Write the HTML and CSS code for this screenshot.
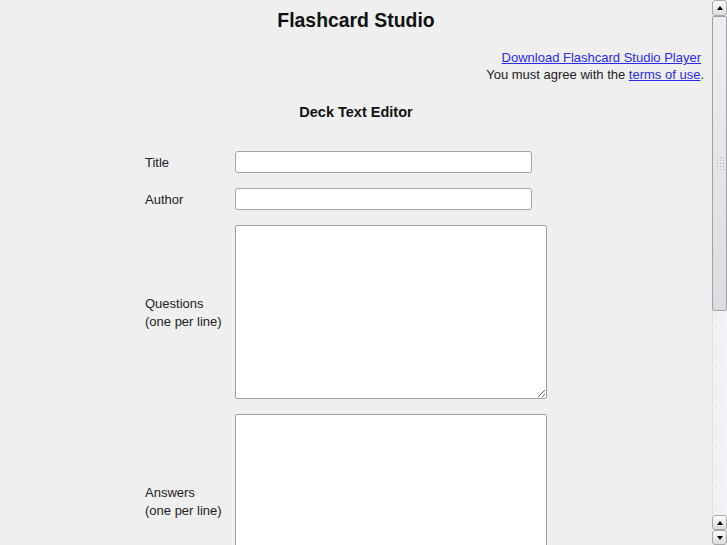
FILE: index.html
```html
<!DOCTYPE html>
<html>
<head>
<meta charset="utf-8">
<title>Flashcard Studio</title>
<link rel="stylesheet" href="styles.css">
</head>
<body>
<div class="page">
  <div class="content">
    <h1 class="title">Flashcard Studio</h1>
    <div class="links">
      <a href="#" class="dl">Download Flashcard Studio Player</a><br>
      You must agree with the <a href="#">terms of use</a>.
    </div>
    <h2 class="subtitle">Deck Text Editor</h2>
    <form class="form">
      <label class="lbl" for="t">Title</label>
      <input class="inp" id="t" type="text">
      <label class="lbl" for="a">Author</label>
      <input class="inp" id="a" type="text">
      <label class="lbl" for="q">Questions<br>(one per line)</label>
      <textarea class="ta" id="q"></textarea>
      <label class="lbl" for="n">Answers<br>(one per line)</label>
      <textarea class="ta" id="n"></textarea>
    </form>
  </div>
  <div class="sbar">
    <div class="btn up top"><span class="tri-up"></span></div>
    <div class="thumb"><span class="grip"></span></div>
    <div class="trough"></div>
    <div class="btn up"><span class="tri-up"></span></div>
    <div class="btn down"><span class="tri-down"></span></div>
  </div>
</div>
</body>
</html>
```
FILE: styles.css
```css
html, body {
  margin: 0;
  padding: 0;
  height: 545px;
  overflow: hidden;
  background: #efefef;
}
.page {
  display: flex;
  height: 545px;
  font-family: "Liberation Sans", Arial, sans-serif;
  font-size: 13px;
  color: #222;
}
.content {
  width: 712px;
  box-sizing: border-box;
  padding: 8px 8px 0 8px;
  overflow: hidden;
}
.title {
  margin: 0;
  font-size: 19.4px;
  line-height: 24px;
  text-align: center;
  color: #111;
}
.links {
  margin-top: 17px;
  text-align: right;
  line-height: 17px;
}
.links a {
  color: #2a2aee;
}
.dl {
  margin-right: 3px;
}
.subtitle {
  margin: 20px 0 0 0;
  font-size: 14.5px;
  line-height: 18px;
  text-align: center;
  color: #111;
}
.form {
  margin: 30px 0 0 137px;
  display: grid;
  grid-template-columns: 90px auto;
  row-gap: 15px;
  align-items: center;
  justify-items: start;
}
.lbl {
  line-height: 18px;
  padding-top: 2px;
  color: #222;
}
.inp {
  box-sizing: border-box;
  width: 297px;
  height: 22px;
  margin: 0;
  border: 1px solid #a4a4a4;
  border-radius: 3px;
  background: #fff;
  padding: 2px 4px;
}
.ta {
  box-sizing: border-box;
  width: 312px;
  height: 174px;
  margin: 0;
  border: 1px solid #a0a0a0;
  border-radius: 2px;
  background: #fff;
  display: block;
}
.sbar {
  width: 15px;
  height: 545px;
  display: flex;
  flex-direction: column;
  background: #f2f2f6;
}
.btn {
  height: 15px;
  box-sizing: border-box;
  border: 1px solid #a8a8a8;
  border-radius: 3px;
  background: linear-gradient(#fbfbfb, #dcdcdc);
  display: flex;
  align-items: center;
  justify-content: center;
}
.btn.top {
  height: 16px;
}
.tri-up {
  width: 0;
  height: 0;
  border-left: 3.5px solid transparent;
  border-right: 3.5px solid transparent;
  border-bottom: 4px solid #000;
}
.tri-down {
  width: 0;
  height: 0;
  border-left: 3.5px solid transparent;
  border-right: 3.5px solid transparent;
  border-top: 4px solid #000;
}
.thumb {
  height: 295px;
  box-sizing: border-box;
  border: 1px solid #a0a0a6;
  border-radius: 2px;
  background: linear-gradient(#eeeef2, #dcdce2);
  display: flex;
  align-items: center;
  justify-content: center;
}
.grip {
  width: 8px;
  height: 16px;
  background-image: radial-gradient(circle, #b4b4ba 0.8px, transparent 1px);
  background-size: 3px 3px;
}
.trough {
  flex: 1;
  border-left: 1px dotted #d0d0d6;
  background-image: radial-gradient(circle, #dcdce4 0.6px, transparent 0.8px);
  background-size: 6px 10px;
}
```
